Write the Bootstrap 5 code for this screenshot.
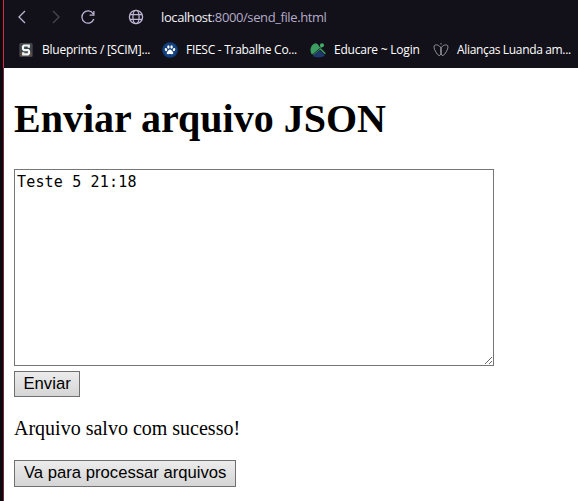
<!DOCTYPE html>
<html lang="pt-BR">
<head>
<meta charset="utf-8">
<meta name="viewport" content="width=device-width, initial-scale=1">
<title>Enviar arquivo JSON</title>
<link href="https://cdn.jsdelivr.net/npm/bootstrap@5.3.0/dist/css/bootstrap.min.css" rel="stylesheet">
<style>
  body { height: 501px; background: #fff; color: #000; }
  .window-edge { width: 4px; background: #0a090e; border-right: 1px solid #7c2440; }
  .chrome { height: 68px; background: #121019; margin-left: -1px; border-left: 1px solid #e0234e; font-family: "Open Sans", "Noto Sans", sans-serif; }
  .address-row { height: 34px; color: #b4abc9; font-size: 13px; padding-left: 8px; }
  .address-row svg { width: 20px; height: 20px; fill: none; stroke: #bdb5d4; stroke-width: 1.3; }
  .address-row .ic-forward { margin-left: 14px; stroke: #4a4656; }
  .address-row .ic-reload { margin-left: 12px; }
  .address-row .ic-globe { margin-left: 28px; }
  .address { letter-spacing: -.4px; margin-left: 15px; padding-top: 1px; }
  .address b { color: #f2f0f7; font-weight: 400; }
  .bookmarks { height: 32px; color: #fff; font-size: 12px; padding-left: 14px; }
  .bookmark svg { width: 16px; height: 16px; margin-right: 8px; }
  .b1 { width: 144px; letter-spacing: -.25px; } .b2 { width: 148px; letter-spacing: -.28px; }
  .b3 { width: 123px; letter-spacing: -.22px; } .b4 { letter-spacing: -.34px; }
  .page { padding: 28px 10px 0; font-family: "Liberation Serif", serif; font-size: 20px; }
  .page h1 { font-size: 40px; line-height: 46px; margin-bottom: 27px; }
  .page p { margin: 16px 0 17px; }
  .json-box { width: 480px; height: 197px; margin-bottom: 5px; padding: 2px; border: 1px solid #767676; font: 15px/20px "DejaVu Sans Mono", monospace; letter-spacing: .17px; color: #000; outline: 0; resize: both; }
  .plain-btn { height: 26px; padding: 0 8.5px 1px; border: 1px solid #707070; border-radius: 0; background: linear-gradient(#ececec, #d5d5d5); color: #000; font: 16.67px/22px "Liberation Sans", sans-serif; }
  .plain-btn.wide { height: 27px; padding: 0 9px 1px; }
</style>
</head>
<body class="d-flex overflow-hidden">
<div class="window-edge flex-shrink-0"></div>
<div class="flex-grow-1">
  <header class="chrome">
    <div class="address-row d-flex align-items-center">
      <svg viewBox="0 0 20 20"><path d="M13 4 7 10l6 6"/></svg>
      <svg class="ic-forward" viewBox="0 0 20 20"><path d="m7 4 6 6-6 6"/></svg>
      <svg class="ic-reload" viewBox="0 0 20 20"><path d="M15.200 6.800A6.100 6.100 0 1 0 15.800 12M15.900 4v4.200h-4.300"/></svg>
      <svg class="ic-globe" viewBox="0 0 20 20"><circle cx="10" cy="10" r="6.600"/><ellipse cx="10" cy="10" rx="3.100" ry="6.600"/><path d="M4 7.600h12M4 12.400h12"/></svg>
      <span class="address text-nowrap"><b>localhost</b>:8000/send_file.html</span>
    </div>
    <nav class="bookmarks d-flex align-items-center text-nowrap">
      <div class="bookmark b1 d-flex align-items-center flex-shrink-0">
        <svg viewBox="0 0 16 16"><rect x="1.300" y="1" width="13.400" height="14" rx="1.500" fill="#414549"/><path d="M2 10h12v4H2z" fill="#584c43"/><path d="M10.800 5.800V3.500H6L5 4.500v2.600l1 1h4.200l.8 1v2.300l-1 1H5.200v-2.200" fill="none" stroke="#eff6f8" stroke-width="2.200"/></svg><span>Blueprints / [SCIM]...</span>
      </div>
      <div class="bookmark b2 d-flex align-items-center flex-shrink-0">
        <svg viewBox="0 0 16 16"><circle cx="8" cy="8" r="7.800" fill="#123f7d"/><g fill="#fff"><ellipse cx="4" cy="7.600" rx="1.200" ry="1.600" transform="rotate(-20 4 7.600)"/><ellipse cx="6.400" cy="5" rx="1.200" ry="1.700"/><ellipse cx="9.600" cy="5" rx="1.200" ry="1.700"/><ellipse cx="12" cy="7.600" rx="1.200" ry="1.600" transform="rotate(20 12 7.600)"/><path d="M8 7.500c-1.300 0-2.800 2-3.200 3.100-.4 1.300.6 1.900 1.500 1.600 1.100-.4 2.300-.4 3.400 0 .9.300 1.900-.3 1.500-1.600C10.800 9.500 9.300 7.500 8 7.500z"/></g></svg><span>FIESC - Trabalhe Co...</span>
      </div>
      <div class="bookmark b3 d-flex align-items-center flex-shrink-0">
        <svg viewBox="0 0 16 16"><path d="M1.500 12C-.8 7.500 1 2 6 1.200l1.800 1L11 7l-7 6z" fill="#3c9d61"/><circle cx="12" cy="3.300" r="2" fill="#43ad68"/><path d="m9.500 6.500 2-2M9.500 6l5.800 5.800" stroke="#3da563" stroke-width="1.500"/><path d="M2.500 14 9.600 8l5.400 5.200C12 16 6 16 2.500 14z" fill="#1d386a"/><path d="m1.500 13.500 9.500-8" stroke="#16131d" stroke-width=".8"/></svg><span>Educare ~ Login</span>
      </div>
      <div class="bookmark b4 d-flex align-items-center flex-shrink-0">
        <svg viewBox="0 0 16 16" fill="none" stroke="#a09ea6" stroke-width=".9"><path d="M8 6C6.500 3 2.500 2 1.200 3.800.6 6.500 2 8.500 3.500 11c1 1.800 2.500 3 3.500 2.300C8.500 12 8.500 8.500 8 6z"/><path d="M8 6c1.500-3 5.500-4 6.800-2.200.6 2.700-.8 4.700-2.300 7.200-1 1.800-2.500 3-3.500 2.300C7.500 12 7.500 8.500 8 6zM8 1v1.500"/></svg><span>Alianças Luanda am...</span>
      </div>
    </nav>
  </header>
  <main class="page">
    <h1 class="fw-bold">Enviar arquivo JSON</h1>
    <form>
      <textarea class="json-box d-block rounded-0" spellcheck="false" aria-label="JSON">Teste 5 21:18</textarea>
      <button class="btn plain-btn d-block" type="button">Enviar</button>
    </form>
    <p>Arquivo salvo com sucesso!</p>
    <button class="btn plain-btn wide d-block" type="button">Va para processar arquivos</button>
  </main>
</div>
<script src="https://cdn.jsdelivr.net/npm/bootstrap@5.3.0/dist/js/bootstrap.bundle.min.js"></script>
</body>
</html>
